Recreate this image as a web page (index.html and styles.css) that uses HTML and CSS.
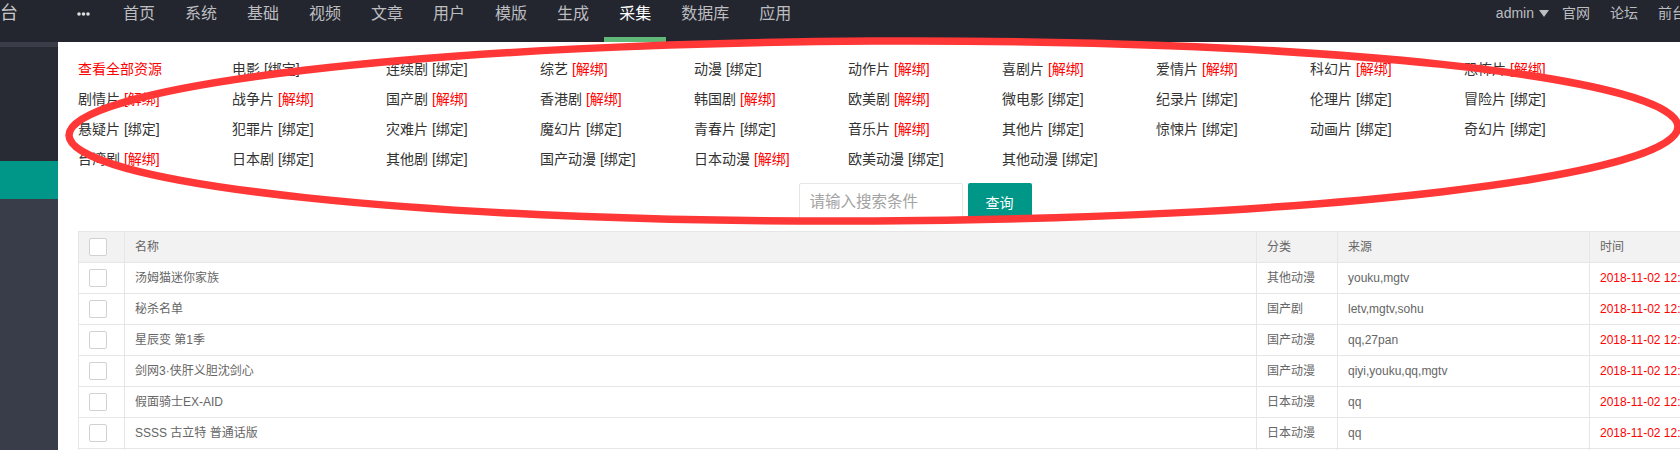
FILE: index.html
```html
<!DOCTYPE html>
<html lang="zh-CN">
<head>
<meta charset="utf-8">
<title>采集</title>
<link rel="stylesheet" href="styles.css">
</head>
<body>
<div class="app">
  <header class="topbar">
    <div class="logo">台</div>
    <ul class="nav">
      <li class="nav-item more"><svg width="16" height="4" viewBox="0 0 16 4"><circle cx="2" cy="2" r="1.8" fill="#fff"/><circle cx="6.5" cy="2" r="1.8" fill="#fff"/><circle cx="11" cy="2" r="1.8" fill="#fff"/></svg></li>
      <li class="nav-item">首页</li>
      <li class="nav-item">系统</li>
      <li class="nav-item">基础</li>
      <li class="nav-item">视频</li>
      <li class="nav-item">文章</li>
      <li class="nav-item">用户</li>
      <li class="nav-item">模版</li>
      <li class="nav-item">生成</li>
      <li class="nav-item active">采集</li>
      <li class="nav-item">数据库</li>
      <li class="nav-item">应用</li>
    </ul>
    <ul class="user-nav">
      <li class="user">admin<span class="caret"></span></li>
      <li>官网</li>
      <li>论坛</li>
      <li>前台</li>
    </ul>
  </header>
  <div class="layout">
    <aside class="side">
      <div class="side-strip"></div>
      <div class="side-top"></div>
      <div class="side-active"></div>
      <div class="side-rest"></div>
    </aside>
    <main class="main">
      <div class="cats">
        <a class="cat all">查看全部资源</a>
        <a class="cat">电影 <span>[绑定]</span></a>
        <a class="cat">连续剧 <span>[绑定]</span></a>
        <a class="cat">综艺 <span class="un">[解绑]</span></a>
        <a class="cat">动漫 <span>[绑定]</span></a>
        <a class="cat">动作片 <span class="un">[解绑]</span></a>
        <a class="cat">喜剧片 <span class="un">[解绑]</span></a>
        <a class="cat">爱情片 <span class="un">[解绑]</span></a>
        <a class="cat">科幻片 <span class="un">[解绑]</span></a>
        <a class="cat">恐怖片 <span class="un">[解绑]</span></a>

        <a class="cat">剧情片 <span class="un">[解绑]</span></a>
        <a class="cat">战争片 <span class="un">[解绑]</span></a>
        <a class="cat">国产剧 <span class="un">[解绑]</span></a>
        <a class="cat">香港剧 <span class="un">[解绑]</span></a>
        <a class="cat">韩国剧 <span class="un">[解绑]</span></a>
        <a class="cat">欧美剧 <span class="un">[解绑]</span></a>
        <a class="cat">微电影 <span>[绑定]</span></a>
        <a class="cat">纪录片 <span>[绑定]</span></a>
        <a class="cat">伦理片 <span>[绑定]</span></a>
        <a class="cat">冒险片 <span>[绑定]</span></a>

        <a class="cat">悬疑片 <span>[绑定]</span></a>
        <a class="cat">犯罪片 <span>[绑定]</span></a>
        <a class="cat">灾难片 <span>[绑定]</span></a>
        <a class="cat">魔幻片 <span>[绑定]</span></a>
        <a class="cat">青春片 <span>[绑定]</span></a>
        <a class="cat">音乐片 <span class="un">[解绑]</span></a>
        <a class="cat">其他片 <span>[绑定]</span></a>
        <a class="cat">惊悚片 <span>[绑定]</span></a>
        <a class="cat">动画片 <span>[绑定]</span></a>
        <a class="cat">奇幻片 <span>[绑定]</span></a>

        <a class="cat">台湾剧 <span class="un">[解绑]</span></a>
        <a class="cat">日本剧 <span>[绑定]</span></a>
        <a class="cat">其他剧 <span>[绑定]</span></a>
        <a class="cat">国产动漫 <span>[绑定]</span></a>
        <a class="cat">日本动漫 <span class="un">[解绑]</span></a>
        <a class="cat">欧美动漫 <span>[绑定]</span></a>
        <a class="cat">其他动漫 <span>[绑定]</span></a>
      </div>
      <form class="search">
        <input class="search-input" type="text" placeholder="请输入搜索条件">
        <button class="search-btn" type="button">查询</button>
      </form>
      <table class="grid">
        <colgroup>
          <col class="c-check"><col class="c-name"><col class="c-type"><col class="c-src"><col class="c-time">
        </colgroup>
        <thead>
          <tr><th><span class="cb"></span></th><th>名称</th><th>分类</th><th>来源</th><th>时间</th></tr>
        </thead>
        <tbody>
          <tr><td><span class="cb"></span></td><td>汤姆猫迷你家族</td><td>其他动漫</td><td>youku,mgtv</td><td class="time">2018-11-02 12:30:15</td></tr>
          <tr><td><span class="cb"></span></td><td>秘杀名单</td><td>国产剧</td><td>letv,mgtv,sohu</td><td class="time">2018-11-02 12:30:15</td></tr>
          <tr><td><span class="cb"></span></td><td>星辰变 第1季</td><td>国产动漫</td><td>qq,27pan</td><td class="time">2018-11-02 12:30:15</td></tr>
          <tr><td><span class="cb"></span></td><td>剑网3·侠肝义胆沈剑心</td><td>国产动漫</td><td>qiyi,youku,qq,mgtv</td><td class="time">2018-11-02 12:30:15</td></tr>
          <tr><td><span class="cb"></span></td><td>假面骑士EX-AID</td><td>日本动漫</td><td>qq</td><td class="time">2018-11-02 12:30:15</td></tr>
          <tr><td><span class="cb"></span></td><td>SSSS 古立特 普通话版</td><td>日本动漫</td><td>qq</td><td class="time">2018-11-02 12:30:15</td></tr>
          <tr><td><span class="cb"></span></td><td>斗罗大陆</td><td>国产动漫</td><td>qq</td><td class="time">2018-11-02 12:30:15</td></tr>
        </tbody>
      </table>
    </main>
  </div>
  <svg class="annot" width="1771" height="450" viewBox="0 0 1771 450">
    <ellipse cx="873.5" cy="131" rx="804.5" ry="90" transform="rotate(-0.3 873.5 131)" fill="none" stroke="#ff3737" stroke-width="7.5"/>
  </svg>
</div>
</body>
</html>
```

FILE: styles.css
```css
html, body {
  margin: 0;
  padding: 0;
  overflow: hidden;
  background: #fff;
}
body {
  font-family: "Liberation Sans", "Noto Sans CJK SC", sans-serif;
  color: #333;
}
.app {
  position: relative;
  width: 1771px;
}
ul { list-style: none; margin: 0; padding: 0; }

/* top bar */
.topbar {
  display: flex;
  align-items: flex-start;
  height: 42px;
  background: #23262e;
  padding-right: 85px;
}
.logo {
  width: 62px;
  font-size: 18px;
  line-height: 27px;
  color: #c7c8ca;
  overflow: hidden;
}
.nav { display: flex; height: 42px; }
.nav-item {
  position: relative;
  height: 42px;
  padding: 0 15px;
  font-size: 16px;
  line-height: 27px;
  color: #bcbdc0;
}
.nav-item.more { display: flex; align-items: flex-start; padding-top: 12px; height: 30px; opacity: .85; }
.nav-item.active { color: #fff; }
.nav-item.active::after {
  content: "";
  position: absolute;
  left: 0; right: 0; bottom: 0;
  height: 5px;
  background: #5fb878;
}
.user-nav {
  display: flex;
  margin-left: auto;
  gap: 20px;
  font-size: 14px;
  line-height: 27px;
  color: #bcbdc0;
}
.user { display: flex; align-items: center; height: 27px; margin-right: -7px; }
.caret {
  width: 0; height: 0;
  margin-left: 5px;
  border-left: 5.5px solid transparent;
  border-right: 5.5px solid transparent;
  border-top: 7px solid #bcbdc0;
}

/* layout */
.layout { display: flex; }
.side {
  width: 58px;
  flex: none;
  display: flex;
  flex-direction: column;
  background: #393d49;
  min-height: 408px;
}
.side-strip { height: 5px; background: #3a3d48; }
.side-top { height: 114px; background: #282b33; }
.side-active { height: 38px; background: #009688; }
.side-rest { flex: 1; background: #393d49; }

.main {
  flex: 1;
  padding: 12px 20px 0 20px;
}

/* categories */
.cats {
  display: grid;
  grid-template-columns: repeat(10, 154px);
  grid-auto-rows: 30px;
}
.cat {
  font-size: 14px;
  line-height: 30px;
  color: #333;
  white-space: nowrap;
}
.cat.all { color: #ff0000; }
.cat .un { color: #ff0000; }

/* search */
.search {
  display: flex;
  justify-content: center;
  gap: 5px;
  margin: 9px 0 10px;
}
.search-input {
  box-sizing: border-box;
  width: 164px;
  height: 38px;
  border: 1px solid #e6e6e6;
  border-radius: 2px;
  padding: 0 10px;
  font-family: inherit;
  font-size: 15.5px;
  color: #333;
  outline: none;
}
.search-input::placeholder { color: #a3a3a3; }
.search-btn {
  width: 64px;
  height: 38px;
  border: 0;
  border-radius: 2px;
  background: #009688;
  color: #fff;
  font-family: inherit;
  font-size: 14px;
  padding: 0;
}

/* table */
.grid {
  width: 1673px;
  border-collapse: collapse;
  table-layout: fixed;
  font-size: 12px;
  color: #666;
}
.c-check { width: 46px; }
.c-name { width: 1132px; }
.c-type { width: 81px; }
.c-src { width: 252px; }
.c-time { width: 162px; }
.grid th, .grid td {
  height: 30px;
  padding: 0 10px;
  border: 1px solid #e6e6e6;
  text-align: left;
  font-weight: normal;
  line-height: 20px;
  white-space: nowrap;
  overflow: hidden;
}
.grid th { background: #f2f2f2; }
.grid td.time { color: #ff0000; }
.cb {
  display: block;
  box-sizing: border-box;
  width: 18px;
  height: 18px;
  border: 1px solid #d2d2d2;
  border-radius: 2px;
  background: #fff;
}

/* annotation */
.annot {
  position: absolute;
  left: 0;
  top: 0;
  pointer-events: none;
}
```
